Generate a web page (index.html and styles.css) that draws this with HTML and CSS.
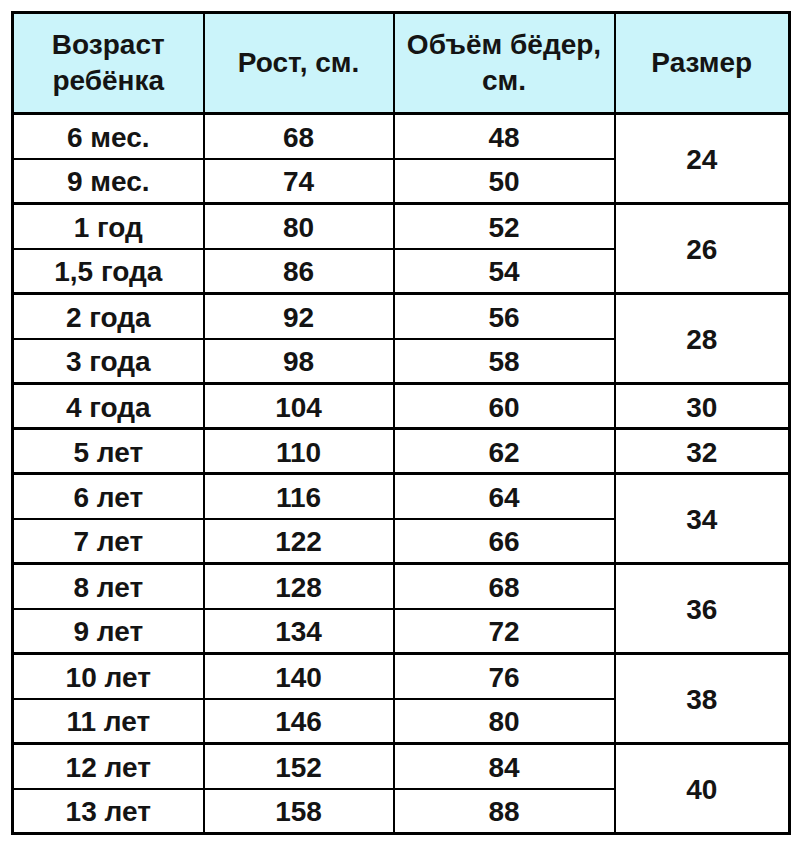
FILE: index.html
```html
<!DOCTYPE html>
<html lang="ru">
<head>
<meta charset="utf-8">
<title>Размерная таблица</title>
<link rel="stylesheet" href="styles.css">
</head>
<body>
<table class="sizes">
  <colgroup>
    <col class="c-age"><col class="c-height"><col class="c-hips"><col class="c-size">
  </colgroup>
  <thead>
    <tr>
      <th>Возраст<br>ребёнка</th>
      <th>Рост, см.</th>
      <th>Объём бёдер,<br>см.</th>
      <th>Размер</th>
    </tr>
  </thead>
  <tbody>
    <tr><td>6 мес.</td><td>68</td><td>48</td><td rowspan="2">24</td></tr>
    <tr><td>9 мес.</td><td>74</td><td>50</td></tr>
  </tbody>
  <tbody>
    <tr><td>1 год</td><td>80</td><td>52</td><td rowspan="2">26</td></tr>
    <tr><td>1,5 года</td><td>86</td><td>54</td></tr>
  </tbody>
  <tbody>
    <tr><td>2 года</td><td>92</td><td>56</td><td rowspan="2">28</td></tr>
    <tr><td>3 года</td><td>98</td><td>58</td></tr>
  </tbody>
  <tbody>
    <tr><td>4 года</td><td>104</td><td>60</td><td>30</td></tr>
  </tbody>
  <tbody>
    <tr><td>5 лет</td><td>110</td><td>62</td><td>32</td></tr>
  </tbody>
  <tbody>
    <tr><td>6 лет</td><td>116</td><td>64</td><td rowspan="2">34</td></tr>
    <tr><td>7 лет</td><td>122</td><td>66</td></tr>
  </tbody>
  <tbody>
    <tr><td>8 лет</td><td>128</td><td>68</td><td rowspan="2">36</td></tr>
    <tr><td>9 лет</td><td>134</td><td>72</td></tr>
  </tbody>
  <tbody>
    <tr><td>10 лет</td><td>140</td><td>76</td><td rowspan="2">38</td></tr>
    <tr><td>11 лет</td><td>146</td><td>80</td></tr>
  </tbody>
  <tbody>
    <tr><td>12 лет</td><td>152</td><td>84</td><td rowspan="2">40</td></tr>
    <tr><td>13 лет</td><td>158</td><td>88</td></tr>
  </tbody>
</table>
</body>
</html>
```

FILE: styles.css
```css
html, body {
  margin: 0;
  padding: 0;
  background: #ffffff;
}

body {
  font-family: "Liberation Sans", Arial, sans-serif;
  color: #141414;
}

.sizes {
  margin: 11px 0 0 11px;
  width: 777px;
  table-layout: fixed;
  border-collapse: collapse;
  border: 3px solid #000;
  font-size: 28px;
  font-weight: bold;
  text-align: center;
}

.c-age { width: 191px; }
.c-height { width: 190px; }
.c-hips { width: 221px; }
.c-size { width: 175px; }

.sizes th,
.sizes td {
  border: 2px solid #000;
  padding: 0;
  vertical-align: middle;
}

.sizes th {
  background: #cbf4fa;
  font-weight: bold;
  line-height: 36px;
}

.sizes thead tr {
  height: 101px;
}

.sizes thead {
  border-bottom: 3px solid #000;
}

.sizes tbody {
  border-top: 3px solid #000;
}

.sizes tbody tr {
  height: 45px;
}

.sizes td {
  line-height: 32px;
  padding-top: 3px;
}
```
